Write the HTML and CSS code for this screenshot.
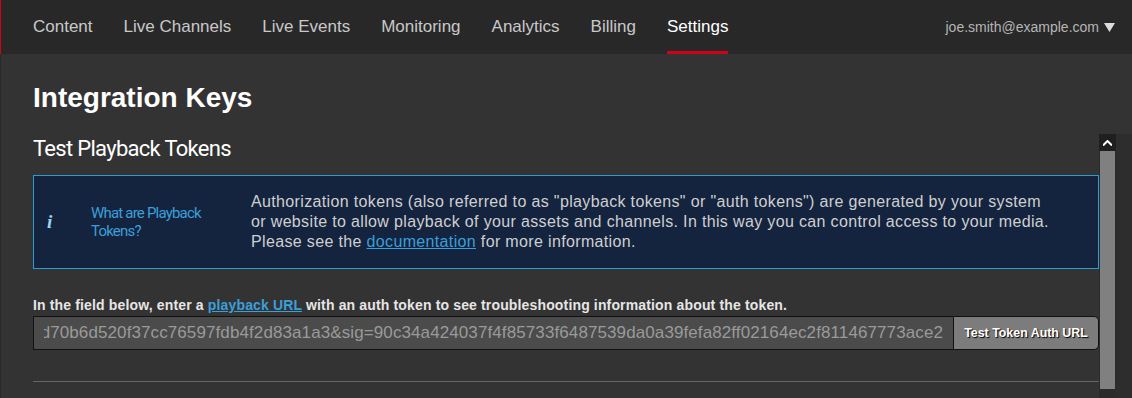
FILE: index.html
```html
<!DOCTYPE html>
<html lang="en">
  <head>
    <meta charset="UTF-8" />
    <meta name="viewport" content="width=device-width, initial-scale=1.0" />
    <title>Integration Keys</title>
    <link rel="stylesheet" href="styles.css">
  </head>
  <body>
    <nav class="topnav">
      <a href="#" class="nav-link">Content</a>
      <a href="#" class="nav-link">Live Channels</a>
      <a href="#" class="nav-link">Live Events</a>
      <a href="#" class="nav-link">Monitoring</a>
      <a href="#" class="nav-link">Analytics</a>
      <a href="#" class="nav-link">Billing</a>
      <a href="#" class="nav-link active">Settings</a>
      <div class="user-menu">
        <span>joe.smith@example.com</span>
        <svg class="caret" width="11" height="9" viewBox="0 0 11 9"><path d="M0 0h11L5.5 9z" fill="#dcdcdc"/></svg>
      </div>
    </nav>

    <div class="page">
      <header class="page-header">
        <h1>Integration Keys</h1>
      </header>

      <div class="scroll-area">
        <div class="scroll-content">
          <h2 class="section-title">Test Playback Tokens</h2>

          <div class="info-box">
            <div class="info-icon">i</div>
            <div class="info-label">What are Playback Tokens?</div>
            <div class="info-text">
              Authorization tokens (also referred to as "playback tokens" or "auth tokens") are generated by your system
              or website to allow playback of your assets and channels. In this way you can control access to your media.
              Please see the <a href="#">documentation</a> for more information.
            </div>
          </div>

          <p class="instructions">In the field below, enter a <a href="#">playback URL</a> with an auth token to see troubleshooting information about the token.</p>

          <div class="token-form">
            <div class="token-input">
              <div class="token-value">
                <span>https://content.uplynk.com/player5/2mKf9Xq.html?tc=1&amp;exp=1555452000&amp;rn=2843017265&amp;ct=a&amp;cid=bd70b6d520f37cc76597fdb4f2d83a1a3&amp;sig=90c34a424037f4f85733f6487539da0a39fefa82ff02164ec2f811467773ace2</span>
              </div>
            </div>
            <button class="test-btn">Test Token Auth URL</button>
          </div>

          <hr class="divider" />
        </div>

        <div class="scrollbar">
          <div class="sb-up">
            <svg width="9" height="6" viewBox="0 0 9 6"><path d="M0 5.5L4.5 1 9 5.5" fill="none" stroke="#fff" stroke-width="2"/></svg>
          </div>
          <div class="sb-thumb"></div>
        </div>
        <div class="gutter"></div>
      </div>
    </div>
  </body>
</html>
```

FILE: styles.css
```css
body {
  margin: 0;
  background-color: #333333;
  font-family: "Liberation Sans", Arial, sans-serif;
  overflow: hidden;
}

a {
  color: #3b9fd8;
}

.topnav {
  display: flex;
  height: 54px;
  padding-left: 32px;
  background-color: #282828;
  border-left: 1px solid #d0021b;
}

.nav-link {
  display: flex;
  align-items: center;
  margin-right: 31px;
  font-size: 17px;
  color: #c8c8c8;
  text-decoration: none;
}

.nav-link.active {
  color: #ffffff;
  box-shadow: inset 0 -3px 0 #d0021b;
}

.user-menu {
  display: flex;
  align-items: center;
  margin-left: auto;
  padding-right: 17px;
  font-size: 14px;
  color: #b5b5b5;
}

.caret {
  margin-left: 5px;
}

.page {
  border-left: 1px solid #2a2a2a;
}

.page-header {
  padding: 28px 32px 0;
  height: 52px;
}

.page-header h1 {
  margin: 0;
  font-size: 28px;
  line-height: 32px;
  font-weight: bold;
  color: #ffffff;
}

.scroll-area {
  display: flex;
  height: 264px;
  overflow: hidden;
}

.scroll-content {
  flex: 1;
  min-width: 0;
  padding-left: 32px;
}

.section-title {
  margin: 2px 0 13px;
  font-family: Roboto, sans-serif;
  font-size: 22px;
  line-height: 26px;
  font-weight: normal;
  letter-spacing: -0.7px;
  color: #ffffff;
}

.info-box {
  display: flex;
  align-items: center;
  padding: 16px 0;
  background-color: #14243f;
  border: 1px solid #2b9bd3;
}

.info-icon {
  flex: none;
  width: 44px;
  padding-left: 13px;
  font-family: "Liberation Serif", serif;
  font-style: italic;
  font-weight: bold;
  font-size: 19px;
  color: #9fd4f0;
}

.info-label {
  flex: none;
  width: 130px;
  margin-right: 30px;
  font-family: Roboto, sans-serif;
  font-size: 15px;
  line-height: 18px;
  letter-spacing: -0.8px;
  color: #3b9fd8;
}

.info-text {
  flex: 1;
  min-width: 0;
  padding-right: 44px;
  font-size: 16px;
  line-height: 20px;
  letter-spacing: 0.35px;
  color: #cfcfcf;
}

.instructions {
  margin: 27px 0 2px;
  font-size: 14px;
  line-height: 18px;
  font-weight: bold;
  letter-spacing: 0.15px;
  color: #e6e6e6;
}

.token-form {
  display: flex;
  height: 34px;
}

.token-input {
  flex: 1;
  min-width: 0;
  display: flex;
  padding: 0 10px;
  background-color: #4b4b4b;
  border: 1px solid #111111;
  border-right: none;
}

.token-value {
  flex: 1;
  min-width: 0;
  display: flex;
  justify-content: flex-end;
  align-items: center;
  overflow: hidden;
  font-size: 17px;
  letter-spacing: 0.1px;
  color: #9a9a9a;
  white-space: nowrap;
}

.token-value span {
  flex: none;
}

.test-btn {
  flex: none;
  width: 146px;
  padding: 0;
  font-family: "Liberation Sans", Arial, sans-serif;
  font-size: 12.4px;
  font-weight: bold;
  color: #ffffff;
  text-shadow: 1px 1px 1px #000000;
  background-color: #7c7c7c;
  border: 1px solid #111111;
  border-radius: 0 5px 5px 0;
  cursor: pointer;
}

.divider {
  margin: 31px 0 0;
  border: none;
  border-top: 1px solid #666666;
}

.scrollbar {
  flex: none;
  display: flex;
  flex-direction: column;
  width: 17px;
  background-color: #2b2b2b;
}

.sb-up {
  display: flex;
  align-items: center;
  justify-content: center;
  height: 17px;
  background-color: #1f1f1f;
}

.sb-thumb {
  flex: 1;
  margin: 0 1px 9px;
  background-color: #808080;
}

.gutter {
  flex: none;
  width: 16px;
  background-color: #2d2d2d;
}
```
